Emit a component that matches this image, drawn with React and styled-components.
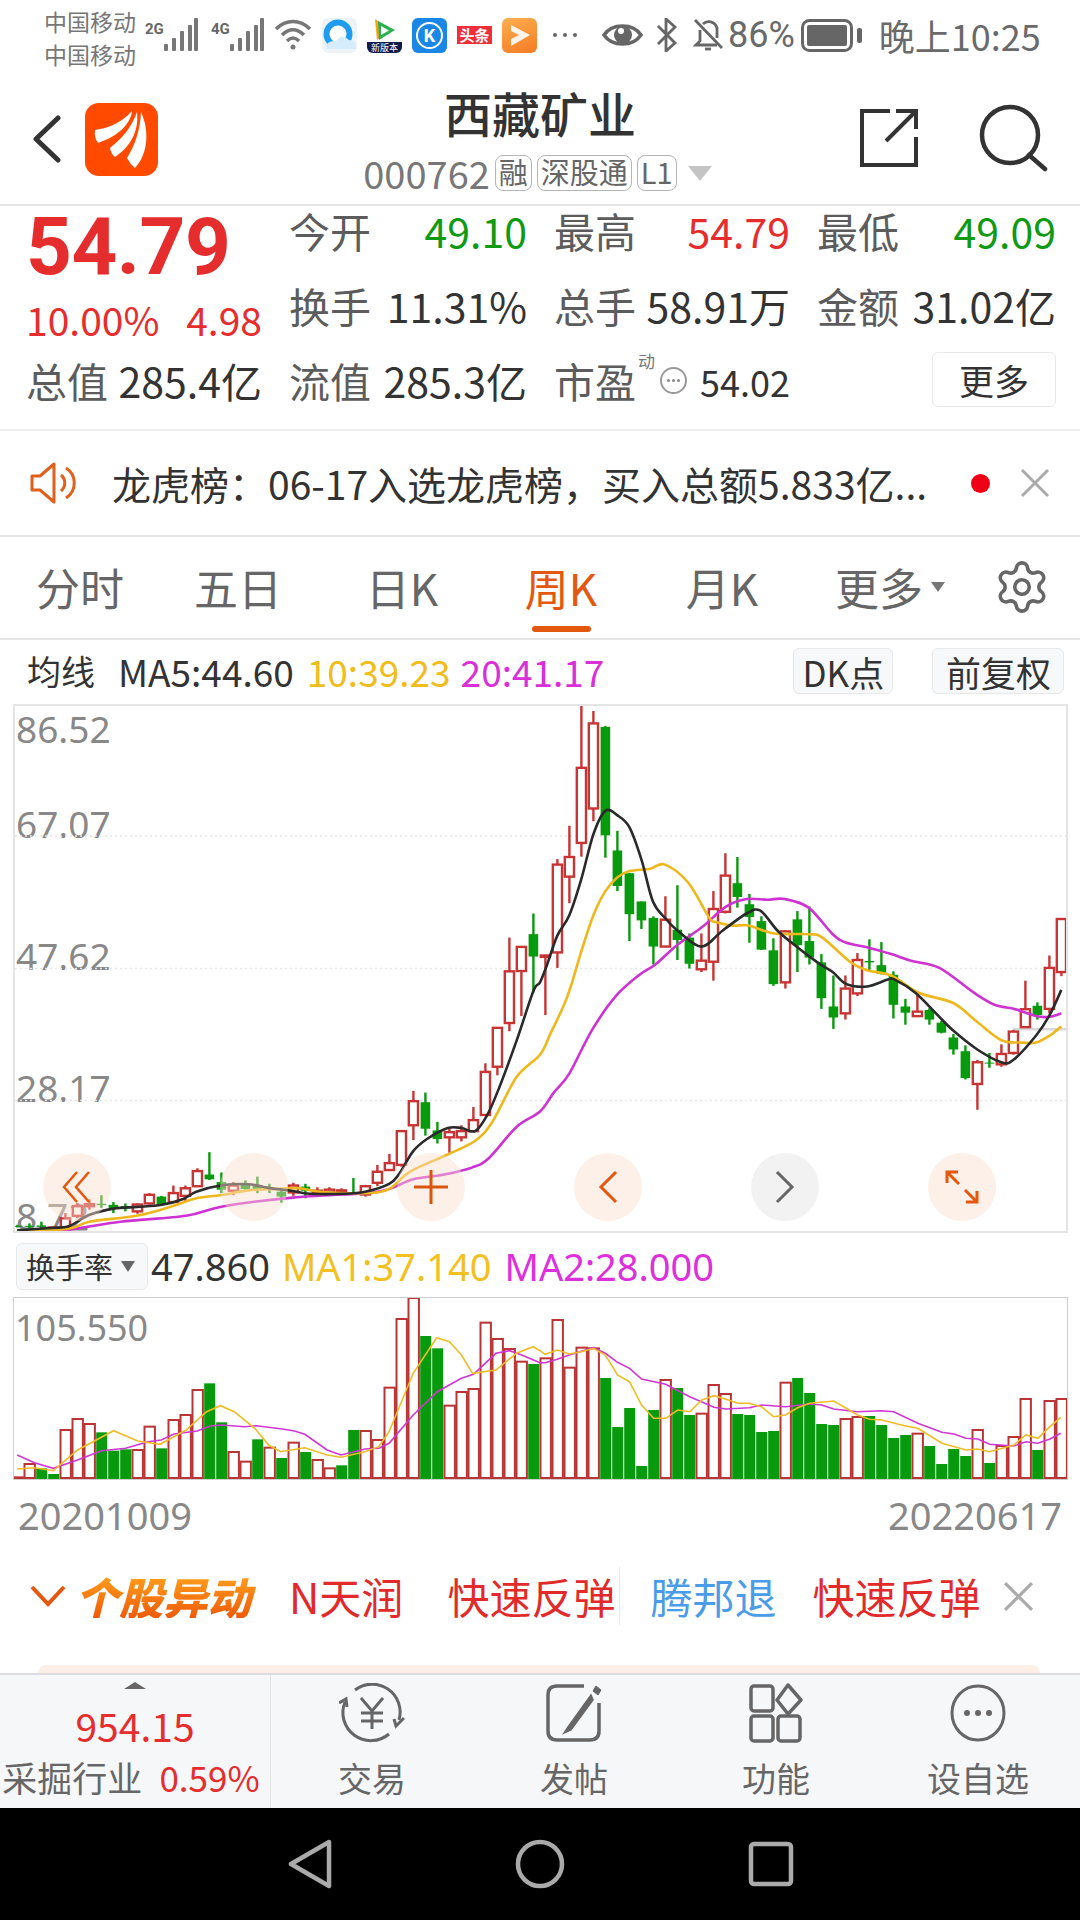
import styled, { createGlobalStyle } from 'styled-components'
import { Settings } from 'lucide-react'

const GlobalStyle = createGlobalStyle`
  html, body { margin: 0; padding: 0; background: #fff; }
  * { box-sizing: border-box; }
  body { font-family: "Noto Sans CJK SC", "Noto Sans", sans-serif; }
`

const RED = '#e62d2d'
const GREEN = '#0f9a14'

// candle data: top wick, body top, body bottom, bottom wick, read off the reference in zoom units
const CANDLES = [
  ['g',1524,1527,1530,1532],['g',1520,1527,1530,1535],['g',1515,1526,1530,1540],['r',1530,1532,1535,1536],
  ['r',1490,1505,1532,1534],['r',1460,1470,1498,1505],['r',1450,1464,1470,1480],['g',1438,1463,1467,1475],
  ['g',1458,1466,1476,1490],['g',1462,1470,1476,1485],['r',1462,1465,1485,1492],['r',1432,1437,1462,1465],
  ['g',1440,1442,1466,1468],['r',1410,1432,1458,1460],['r',1410,1418,1440,1455],['r',1360,1368,1412,1414],
  ['g',1313,1378,1392,1394],['g',1372,1400,1422,1432],['r',1400,1410,1425,1438],['g',1395,1405,1420,1422],
  ['g',1384,1408,1420,1432],['g',1405,1415,1420,1432],['g',1425,1428,1442,1460],['r',1402,1410,1430,1440],
  ['g',1405,1413,1425,1447],['r',1415,1425,1430,1435],['r',1415,1422,1430,1438],['r',1418,1424,1430,1438],
  ['g',1388,1430,1436,1437],['r',1408,1412,1436,1442],['r',1350,1370,1402,1412],['r',1318,1345,1365,1367],
  ['r',1250,1252,1350,1355],['r',1135,1165,1235,1278],['g',1140,1168,1245,1265],['g',1225,1250,1275,1288],
  ['r',1245,1255,1270,1315],['r',1235,1252,1270,1282],['r',1182,1220,1252,1254],['r',1055,1080,1205,1207],
  ['r',950,952,1065,1090],['r',690,788,938,962],['r',715,717,787,918],['g',620,680,745,850],
  ['r',740,742,746,915],['r',462,478,733,778],['r',365,456,513,590],['r',12,197,415,455],
  ['r',32,68,315,352],['g',75,78,393,458],['g',380,437,540,555],['g',503,503,622,700],
  ['g',585,585,640,665],['g',628,633,716,768],['r',570,638,716,718],['g',538,667,697,755],
  ['g',678,690,766,780],['r',678,757,782,790],['r',555,607,760,815],['r',445,510,615,620],
  ['g',456,532,572,603],['g',563,593,630,705],['g',628,642,725,726],['g',692,727,825,830],
  ['r',668,672,820,838],['g',613,637,712,790],['g',600,700,748,768],['g',738,762,866,897],
  ['g',800,890,922,955],['r',800,838,910,928],['r',735,755,852,860],['g',695,758,762,790],
  ['g',703,770,795,797],['g',788,798,885,925],['g',868,890,908,943],['r',850,905,918,920],
  ['g',895,900,928,943],['g',932,937,966,968],['g',970,980,1015,1030],['g',1003,1020,1098,1102],
  ['r',1045,1052,1115,1190],['g',1025,1053,1056,1068],['r',1000,1028,1058,1065],['r',958,963,1025,1030],
  ['r',815,898,950,952],['g',878,888,915,928],['r',742,778,897,910],['r',635,636,790,802],
]

const VOLUME = [
  ['r',712],['r',672],['g',685],['g',702],['r',570],['r',537],['r',552],['g',577],['g',632],['g',628],['r',630],
  ['r',560],['g',625],['r',540],['r',525],['r',450],['g',430],['g',547],['r',636],['r',665],['g',598],['r',623],
  ['g',654],['r',608],['g',636],['r',660],['r',685],['g',676],['g',570],['r',573],['r',600],['r',443],['r',237],
  ['r',174],['g',288],['g',325],['r',497],['r',456],['r',447],['r',248],['r',297],['r',327],['r',365],['g',372],
  ['r',355],['r',240],['r',383],['r',323],['r',325],['g',414],['g',561],['g',504],['g',678],['g',510],['r',420],
  ['g',444],['g',525],['r',521],['r',435],['r',462],['g',522],['g',525],['g',576],['g',573],['r',428],['g',414],
  ['g',459],['g',552],['g',555],['r',537],['r',531],['g',528],['g',555],['g',594],['g',585],['r',581],['g',618],
  ['g',672],['g',627],['g',648],['r',570],['g',669],['r',618],['r',591],['r',477],['g',630],['r',483],['r',477],
]

const SCALE = 2.904
const VOL_Y = 3
const mix = (left, right, top, ys = SCALE) => [
  ...left.map(([x, y]) => [x / SCALE, top + y / ys]),
  ...right.map(([x, y]) => [540 + x / SCALE, top + y / ys]),
]

// catmull-rom through the points, the price lines are smooth in the picture
const smooth = pts => {
  let d = `M${pts[0][0].toFixed(1)} ${pts[0][1].toFixed(1)}`
  for (let i = 0; i < pts.length - 1; i++) {
    const p0 = pts[i - 1] || pts[i]
    const p1 = pts[i]
    const p2 = pts[i + 1]
    const p3 = pts[i + 2] || p2
    const c1 = [p1[0] + (p2[0] - p0[0]) / 6, p1[1] + (p2[1] - p0[1]) / 6]
    const c2 = [p2[0] - (p3[0] - p1[0]) / 6, p2[1] - (p3[1] - p1[1]) / 6]
    d += `C${c1[0].toFixed(1)} ${c1[1].toFixed(1)} ${c2[0].toFixed(1)} ${c2[1].toFixed(1)} ${p2[0].toFixed(1)} ${p2[1].toFixed(1)}`
  }
  return d
}
const flat = pts => pts.map(p => p.map(n => n.toFixed(1)).join(',')).join(' ')

const MA_BLACK = mix(
  [[50,1540],[150,1533],[200,1528],[260,1495],[330,1477],[400,1472],[470,1466],[530,1450],[570,1428],[640,1410],[720,1406],[780,1417],[850,1426],[900,1434],[1000,1434],[1060,1428],[1130,1405],[1160,1375],[1200,1310],[1240,1275],[1300,1243],[1340,1243],[1380,1252],[1415,1205],[1450,1125],[1500,990],[1549,845]],
  [[0,820],[20,770],[50,685],[85,625],[120,520],[155,390],[190,322],[225,335],[260,370],[295,465],[328,585],[365,635],[400,670],[468,716],[530,670],[600,620],[640,612],[690,670],[750,720],[810,765],[850,790],[890,825],[950,832],[1010,812],[1030,812],[1090,850],[1150,910],[1200,960],[1270,1015],[1340,1052],[1375,1045],[1440,975],[1480,915],[1514,842]],
  700)
const MA_YELLOW = mix(
  [[50,1545],[200,1535],[260,1515],[400,1497],[500,1470],[570,1447],[640,1438],[720,1424],[800,1420],[870,1418],[930,1428],[1060,1432],[1130,1420],[1190,1370],[1300,1320],[1380,1280],[1430,1225],[1500,1095]],
  [[0,1030],[30,970],[80,860],[120,730],[155,625],[190,555],[225,515],[260,497],[320,490],[363,478],[430,530],[490,630],[510,645],[560,655],[605,655],[680,678],[780,680],[820,690],[900,760],[950,785],[1020,800],[1100,850],[1200,880],[1270,935],[1340,988],[1400,995],[1440,995],[1480,975],[1514,948]],
  700)
const MA_PINK = mix(
  [[50,1548],[200,1538],[350,1515],[540,1498],[650,1470],[850,1445],[1060,1432],[1130,1420],[1200,1392],[1290,1378],[1370,1358],[1420,1330],[1500,1240]],
  [[0,1195],[40,1140],[85,1085],[150,960],[220,860],[290,797],[335,768],[400,710],[470,660],[540,600],[600,578],[660,580],[710,578],[780,603],[850,680],[890,705],[950,718],[1020,738],[1080,758],[1160,778],[1260,850],[1320,885],[1380,898],[1440,918],[1480,920],[1514,910]],
  700)
const VOL_YELLOW = mix(
  [[50,687],[100,683],[155,692],[225,630],[330,572],[400,603],[465,613],[540,570],[600,515],[640,497],[680,515],[740,565],[780,615],[815,635],[885,623],[950,645],[990,652],[1060,635],[1100,620],[1130,575],[1200,400],[1268,293],[1305,305],[1340,345],[1372,400],[1440,390],[1500,340],[1548,320]],
  [[0,332],[15,343],[50,330],[85,342],[120,335],[155,325],[190,345],[225,405],[260,425],[295,495],[330,535],[365,535],[400,510],[435,515],[470,480],[505,467],[540,478],[575,490],[608,490],[643,500],[678,530],[713,525],[748,503],[783,490],[853,483],[887,503],[922,525],[957,538],[992,540],[1062,558],[1097,565],[1167,610],[1237,630],[1271,627],[1306,635],[1376,615],[1411,585],[1446,595],[1481,560],[1512,532]],
  1240, VOL_Y)
const VOL_PINK = mix(
  [[50,645],[100,668],[155,685],[225,660],[295,632],[365,625],[430,605],[468,600],[505,582],[573,573],[610,558],[645,555],[710,560],[745,557],[820,567],[855,573],[885,583],[950,630],[990,645],[1060,627],[1100,625],[1130,610],[1200,525],[1270,455],[1340,415],[1375,403],[1440,340],[1480,332],[1515,345]],
  [[0,368],[15,368],[50,358],[85,345],[155,323],[190,340],[225,367],[260,385],[295,417],[365,433],[435,470],[505,502],[540,507],[608,503],[643,495],[713,500],[783,492],[818,495],[853,507],[922,515],[992,512],[1027,515],[1097,550],[1167,577],[1202,582],[1237,595],[1271,597],[1306,613],[1376,618],[1411,605],[1446,610],[1481,597],[1512,580]],
  1240, VOL_Y)

const Page = styled.div`
  width: 1080px;
  height: 1920px;
  overflow: hidden;
  display: flex;
  flex-direction: column;
  background: #fff;
  color: #333;
  line-height: 1;
`

/* status bar */
const StatusBar = styled.div`
  height: 70px;
  flex: none;
  display: flex;
  align-items: center;
  padding-left: 44px;
  color: #777;
`
const Carrier = styled.div`
  width: 101px;
  font-size: 23px;
  line-height: 33px;
  padding-top: 6px;
`
const NetTag = styled.span`
  font: 700 15px "Roboto", sans-serif;
  width: 18px;
  align-self: flex-start;
  margin-top: 20px;
  margin-left: ${({ $ml }) => $ml || 0}px;
  color: #666;
`
const StatusIcon = styled.svg`
  flex: none;
  margin-left: ${({ $ml }) => $ml || 0}px;
`
const AppIcon = styled.div`
  position: relative;
  width: 35px;
  height: 35px;
  flex: none;
  margin-left: ${({ $ml }) => $ml || 10}px;
  border-radius: 6px;
  overflow: hidden;
  display: flex;
  align-items: center;
  justify-content: center;
  background: ${({ $bg }) => $bg || 'transparent'};
  color: #fff;
`
const VideoCaption = styled.span`
  position: absolute;
  left: 0;
  right: 0;
  bottom: 0;
  height: 11px;
  background: #101c4a;
  font-size: 9px;
  line-height: 11px;
  text-align: center;
  white-space: nowrap;
`
const KRing = styled.div`
  width: 27px;
  height: 27px;
  border: 2.5px solid #fff;
  border-radius: 50%;
  display: flex;
  align-items: center;
  justify-content: center;
  font: 700 18px "Roboto", sans-serif;
`
const NewsMark = styled.div`
  width: 35px;
  height: 18px;
  background: #ee2f3a;
  font-size: 15px;
  font-weight: 700;
  line-height: 18px;
  text-align: center;
  white-space: nowrap;
`
const Dots = styled.div`
  margin-left: 16px;
  width: 24px;
  display: flex;
  justify-content: space-between;
`
const Dot = styled.span`
  width: 4px;
  height: 4px;
  border-radius: 50%;
  background: #666;
`
const Battery = styled.span`
  font-size: 36px;
  margin-left: 5px;
  color: #6a6a6a;
  font-family: "Roboto", sans-serif;
`
const Clock = styled.span`
  font-size: 36px;
  margin-left: 16px;
  color: #6a6a6a;
  white-space: nowrap;
`

/* header */
const Header = styled.div`
  height: 136px;
  flex: none;
  display: grid;
  grid-template-columns: 1fr auto 1fr;
  border-bottom: 2px solid #e4e4e4;
`
const HeaderLeft = styled.div`
  display: flex;
  align-items: center;
  padding: 4px 0 0 32px;
  gap: 24px;
`
const TitleBox = styled.div`
  display: flex;
  flex-direction: column;
  align-items: center;
  padding-top: 18px;
`
const Title = styled.div`
  font-size: 48px;
  font-weight: 500;
  color: #333;
`
const CodeLine = styled.div`
  display: flex;
  align-items: center;
  margin-top: 18px;
  padding-right: 5px;
  gap: 5px;
  color: #777;
`
const Code = styled.span`
  font-size: 38px;
`
const Tag = styled.span`
  height: 36px;
  padding: 0 3px;
  border: 1.5px solid #b5b5b5;
  border-radius: 8px;
  font-size: 29px;
  line-height: 31px;
  color: #666;
`
const CaretDown = styled.span`
  width: 0;
  height: 0;
  margin-left: 6px;
  border-left: 12px solid transparent;
  border-right: 12px solid transparent;
  border-top: 15px solid #c4c4c4;
`
const HeaderRight = styled.div`
  display: flex;
  align-items: center;
  justify-content: flex-end;
  gap: 61px;
  padding: 2px 32px 0 0;
`

/* quote block */
const Quote = styled.div`
  height: 225px;
  flex: none;
  border-bottom: 2px solid #ececec;
`
const QuoteGrid = styled.div`
  margin-top: -13px;
  padding-left: 26px;
  display: grid;
  grid-template-columns: 236px 238px 236px 239px;
  grid-auto-rows: 75px;
  column-gap: 27px;
`
const PriceBlock = styled.div`
  grid-row: 1 / 3;
  padding-top: 19px;
`
const Price = styled.div`
  height: 70px;
  font: 700 80px/70px "Roboto", sans-serif;
  color: ${RED};
  letter-spacing: -0.5px;
`
const Change = styled.div`
  margin-top: 18px;
  display: flex;
  justify-content: space-between;
  font-size: 39px;
  color: ${RED};
`
const Stat = styled.div`
  display: flex;
  align-items: center;
  justify-content: space-between;
  font-size: 41px;
  white-space: nowrap;
`
const StatLabel = styled.span`
  color: #5c5c5c;
`
const StatValue = styled.span`
  color: ${({ $color }) => $color || '#333'};
`
const Superscript = styled.span`
  align-self: flex-start;
  margin: 9px 0 0 2px;
  font-size: 17px;
  color: #777;
`
const DotsCircle = styled.span`
  width: 27px;
  height: 27px;
  margin: 0 auto 0 5px;
  border: 2px solid #999;
  border-radius: 50%;
  display: flex;
  align-items: center;
  justify-content: center;
  gap: 2px;
`
const CircleDot = styled.span`
  width: 3px;
  height: 3px;
  border-radius: 50%;
  background: #888;
`
const SmallValue = styled.span`
  font-size: 36px;
  color: #333;
`
const MoreButton = styled.div`
  justify-self: end;
  align-self: center;
  width: 124px;
  height: 55px;
  margin-top: -3px;
  border: 1.5px solid #e8e8e8;
  border-radius: 6px;
  display: flex;
  align-items: center;
  justify-content: center;
  font-size: 35px;
  color: #333;
`

/* ticker */
const Ticker = styled.div`
  height: 106px;
  flex: none;
  display: flex;
  align-items: center;
  padding-left: 30px;
  border-bottom: 2px solid #e4e4e4;
`
const TickerText = styled.div`
  width: 859px;
  margin-left: 33px;
  font-size: 39px;
  white-space: nowrap;
  color: #333;
`
const RedDot = styled.span`
  width: 19px;
  height: 19px;
  border-radius: 50%;
  background: #f00014;
`
const CloseBox = styled.span`
  display: flex;
  margin-left: ${({ $ml }) => $ml}px;
`

/* period tabs */
const Tabs = styled.div`
  height: 103px;
  flex: none;
  display: grid;
  grid-template-columns: 160px 156px 172px 146px 176px 160px 104px;
  border-bottom: 2px solid #e4e4e4;
`
const Tab = styled.div`
  position: relative;
  display: flex;
  align-items: center;
  justify-content: center;
  padding-bottom: 1px;
  gap: 8px;
  font-size: 44px;
  color: ${({ $active }) => ($active ? '#e4570f' : '#666')};

  &::after {
    content: '';
    display: ${({ $active }) => ($active ? 'block' : 'none')};
    position: absolute;
    left: 44px;
    bottom: 6px;
    width: 59px;
    height: 6px;
    border-radius: 3px;
    background: #e4570f;
  }
`
const TabCaret = styled.span`
  width: 0;
  height: 0;
  border-left: 7px solid transparent;
  border-right: 7px solid transparent;
  border-top: 10px solid #777;
`

/* moving-average row */
const MaRow = styled.div`
  height: 64px;
  flex: none;
  display: flex;
  align-items: center;
  padding: 0 0 2px 27px;
`
const MaText = styled.span`
  font-size: ${({ $size }) => $size || 37}px;
  margin-left: ${({ $ml }) => $ml || 0}px;
  color: ${({ $color }) => $color || '#333'};
  white-space: nowrap;
`
const OptionButton = styled.div`
  height: 46px;
  width: ${({ $w }) => $w}px;
  margin-left: ${({ $ml }) => $ml}px;
  border: 1.5px solid #e8e8e8;
  border-radius: 6px;
  background: #f7f8fa;
  display: flex;
  align-items: center;
  justify-content: center;
  font-size: 35px;
  color: #333;
`

/* charts */
const ChartFrame = styled.div`
  position: relative;
  flex: none;
  width: 1055px;
  height: ${({ $h }) => $h}px;
  margin-left: 13px;
  border: ${({ $b }) => $b}px solid ${({ $line }) => $line};
  svg { display: block; position: relative; }
`
const AxisLabel = styled.span`
  position: absolute;
  left: ${({ $x }) => $x || 1}px;
  top: ${({ $top }) => $top}px;
  font: 400 ${({ $size }) => $size || 37}px/1 "Noto Sans", sans-serif;
  color: #888;
`
const NavLayer = styled.div`
  position: absolute;
  left: 28px;
  top: 447px;
  display: flex;
  gap: 109px;
`
const NavCircle = styled.div`
  width: 68px;
  height: 68px;
  border-radius: 50%;
  background: ${({ $muted }) => ($muted ? 'rgba(232,232,232,.55)' : 'rgba(250,221,203,.45)')};
  display: flex;
  align-items: center;
  justify-content: center;
`
const IndicatorRow = styled.div`
  height: 64px;
  flex: none;
  display: flex;
  align-items: center;
  padding: 2px 0 0 16px;
  font-family: "Noto Sans", sans-serif;
`
const IndicatorSelect = styled.div`
  width: 132px;
  height: 47px;
  margin-right: 3px;
  border: 1.5px solid #e8e8e8;
  border-radius: 6px;
  background: #f7f8fa;
  display: flex;
  align-items: center;
  padding-left: 9px;
  gap: 8px;
  font: 400 29px "Noto Sans CJK SC", sans-serif;
  color: #333;
`
const SelectCaret = styled.span`
  width: 0;
  height: 0;
  border-left: 7px solid transparent;
  border-right: 7px solid transparent;
  border-top: 11px solid #666;
`
const IndicatorValue = styled.span`
  font-size: 38px;
  margin-left: ${({ $ml }) => $ml || 0}px;
  color: ${({ $color }) => $color || '#333'};
  white-space: nowrap;
`
const DateRow = styled.div`
  height: 70px;
  flex: none;
  display: flex;
  align-items: center;
  justify-content: space-between;
  padding: 0 18px;
  font: 400 38px "Noto Sans", sans-serif;
  color: #888;
`

/* signal strip */
const Signals = styled.div`
  height: 92px;
  flex: none;
  display: flex;
  align-items: center;
  padding-left: 30px;
  font-size: 42px;
  white-space: nowrap;
`
const SignalTitle = styled.span`
  margin-left: 9px;
  width: 214px;
  font-size: 44px;
  font-weight: 900;
  font-style: italic;
  background: linear-gradient(180deg, #ffa11c, #ef5a08);
  -webkit-background-clip: text;
  background-clip: text;
  color: transparent;
`
const SignalItem = styled.span`
  margin-left: ${({ $ml }) => $ml || 0}px;
  color: ${({ $color }) => $color || '#e22a2a'};
`
const SignalDivider = styled.span`
  width: 1px;
  height: 58px;
  margin: 0 30px 0 4px;
  background: #e8e8e8;
`
const Peach = styled.div`
  flex: none;
  height: 8px;
  margin: 23px 40px 0 38px;
  border-radius: 14px 14px 0 0;
  background: #fcefe7;
`

/* bottom bar */
const BottomBar = styled.div`
  height: 135px;
  flex: none;
  display: flex;
  background: #f6f7f9;
  border-top: 2px solid #dcdce0;
`
const SectorBox = styled.div`
  width: 271px;
  flex: none;
  border-right: 1px solid #e4e4e6;
  display: flex;
  flex-direction: column;
  align-items: center;
  padding: 7px 8px 0 0;
`
const SectorCaret = styled.span`
  width: 0;
  height: 0;
  margin-left: 8px;
  border-left: 11px solid transparent;
  border-right: 11px solid transparent;
  border-bottom: 7px solid #666;
`
const SectorPrice = styled.div`
  margin: 17px 0 0 8px;
  font-size: 39px;
  color: ${RED};
`
const SectorRow = styled.div`
  margin-top: 14px;
  display: flex;
  gap: 17px;
  font-size: 35px;
  color: #666;
  white-space: nowrap;
`
const SectorChange = styled.span`
  color: ${RED};
`
const BarItems = styled.div`
  display: grid;
  grid-template-columns: repeat(4, 202px);
`
const BarItem = styled.div`
  display: flex;
  flex-direction: column;
  align-items: center;
  padding-top: 8px;
  font-size: 34px;
  color: #666;
  svg { height: 60px; margin-bottom: 18px; }
`

/* system nav */
const SystemNav = styled.div`
  flex: 1;
  background: #000;
  display: flex;
  align-items: center;
  padding: 0 0 0 288px;
  gap: 183px;
`

function Signal() {
  return (
    <StatusIcon width="35" height="34" viewBox="0 0 35 34">
      <g fill="#777">
        <rect x="1" y="26" width="4" height="7" rx="1" />
        <rect x="9" y="20" width="4" height="13" rx="1" />
        <rect x="17" y="13" width="4" height="20" rx="1" />
        <rect x="25" y="7" width="4" height="26" rx="1" />
        <rect x="31" y="0" width="4" height="33" rx="1" />
      </g>
    </StatusIcon>
  )
}

function BarIconTrade() {
  return (
    <svg width="66" viewBox="0 0 66 60" fill="none" stroke="#666" strokeWidth="3">
      <path d="M16 7 A28 28 0 0 1 60 37" />
      <path d="M65 35 L57 43 L55 36" />
      <path d="M6 19 A28 28 0 0 0 50 51" />
      <path d="M0 20 L7 16 L8 24" />
      <path d="M22 15 L33 28 L44 15 M22 30 H44 M22 38 H44 M33 28 V46" />
    </svg>
  )
}

function BarIconPost() {
  return (
    <svg width="56" viewBox="0 0 56 60" fill="none" stroke="#666" strokeWidth="3.5">
      <path d="M38 3 H11 Q2 3 2 12 V48 Q2 57 11 57 H44 Q53 57 53 48 V20" />
      <path d="M45 12 L22 44 L18 50 L25 47 L47 17 Z" fill="#666" strokeWidth="1.5" />
      <path d="M50 3 L55 7 L52 12 L47 8 Z" fill="#666" strokeWidth="1" />
    </svg>
  )
}

function BarIconTools() {
  return (
    <svg width="54" viewBox="0 0 54 60" fill="none" stroke="#666" strokeWidth="3.5">
      <rect x="2" y="3" width="22" height="25" rx="3" />
      <path d="M39 2 L52 17 L39 31 L28 17 Z" strokeLinejoin="round" />
      <rect x="2" y="33" width="22" height="25" rx="3" />
      <rect x="29" y="33" width="22" height="25" rx="3" />
    </svg>
  )
}

function BarIconMore() {
  return (
    <svg width="58" viewBox="0 0 58 60" fill="none" stroke="#666" strokeWidth="3">
      <ellipse cx="29" cy="30" rx="26" ry="27" />
      <g fill="#666" stroke="none">
        <circle cx="18" cy="30" r="3" />
        <circle cx="29" cy="30" r="3" />
        <circle cx="40" cy="30" r="3" />
      </g>
    </svg>
  )
}

const Cross = ({ size = 30, color = '#aaa' }) => (
  <svg width={size} height={size} viewBox="0 0 30 30" stroke={color} strokeWidth="3">
    <path d="M2 2 L28 28 M28 2 L2 28" />
  </svg>
)

function PriceChart() {
  return (
    <svg width="1051" height="525" viewBox="15 706 1051 525">
      {[836, 968.6, 1100.5].map(y => (
        <line key={y} x1="15" x2="1066" y1={y} y2={y} stroke="#e6e6e6" strokeWidth="1.5" strokeDasharray="2 3" />
      ))}
      <rect x="17" y="1230" width="70" height="2" fill="#bbb" />
      <rect x="1013" y="1028" width="54" height="2.5" fill="#d8d8d8" />
      {CANDLES.map(([kind, top, bodyTop, bodyBottom, bottom], i) => {
        const x = 17.4 + 12 * i
        const y = v => 700 + v / SCALE
        const color = kind === 'r' ? '#c83434' : '#079a0c'
        return (
          <g key={i}>
            <line x1={x} x2={x} y1={y(top)} y2={y(bottom)} stroke={color} strokeWidth="2.4" />
            {kind === 'r' ? (
              <rect x={x - 4.6} y={y(bodyTop)} width="9.2" height={Math.max((bodyBottom - bodyTop) / SCALE, 1)} fill="#fff" stroke={color} strokeWidth="2.4" />
            ) : (
              <rect x={x - 4.8} y={y(bodyTop)} width="9.6" height={Math.max((bodyBottom - bodyTop) / SCALE, 1)} fill={color} />
            )}
          </g>
        )
      })}
      <path d={smooth(MA_PINK)} fill="none" stroke="#cf32d2" strokeWidth="2.6" />
      <path d={smooth(MA_YELLOW)} fill="none" stroke="#eeb81c" strokeWidth="2.6" />
      <path d={smooth(MA_BLACK)} fill="none" stroke="#2a2a2a" strokeWidth="2.6" />
    </svg>
  )
}

function VolumeChart() {
  return (
    <svg width="1053" height="181" viewBox="14 1298 1053 181">
      {VOLUME.map(([kind, top], i) => {
        const x = 17.7 + 12 * i
        const y = 1240 + top / VOL_Y
        return kind === 'r' ? (
          <rect key={i} x={x - 5.2} y={y} width="10.4" height={1478 - y} fill="#fff" stroke="#b93434" strokeWidth="2" />
        ) : (
          <rect key={i} x={x - 5.5} y={y} width="11" height={1479 - y} fill="#079a0c" />
        )
      })}
      <polyline points={flat(VOL_PINK)} fill="none" stroke="#d036d4" strokeWidth="1.6" />
      <polyline points={flat(VOL_YELLOW)} fill="none" stroke="#f0bc24" strokeWidth="1.6" />
    </svg>
  )
}

export default function App() {
  return (
    <Page>
      <GlobalStyle />
      <StatusBar>
        <Carrier>中国移动<br />中国移动</Carrier>
        <NetTag>2G</NetTag>
        <Signal />
        <NetTag $ml={13}>4G</NetTag>
        <Signal />
        <StatusIcon $ml={10} width="38" height="34" viewBox="0 0 38 34" fill="none" stroke="#777" strokeWidth="3.5">
          <path d="M2 11 C12 1 26 1 36 11" />
          <path d="M8 17 C15 10 23 10 30 17" />
          <path d="M13 23 C17 19 21 19 25 23" />
          <circle cx="19" cy="29" r="2.5" fill="#777" stroke="none" />
        </StatusIcon>
        <AppIcon $bg="#eef3f8">
          <svg width="35" height="35" viewBox="0 0 35 35">
            <circle cx="16" cy="16" r="11.5" fill="#fff" stroke="#1e9cf0" strokeWidth="6" />
            <path d="M4 31 Q4 22 14 23 Q20 15 27 22 Q35 22 34 31 Z" fill="#d4ecfb" />
          </svg>
        </AppIcon>
        <AppIcon>
          <svg width="35" height="35" viewBox="0 0 35 35">
            <path d="M8 1 L24 12 L10 22 Z" fill="#ff9b1a" />
            <path d="M11 3 L28 12 L12 22 Z" fill="#27b24f" />
            <path d="M14 8 L22 12.5 L14 17 Z" fill="#fff" />
          </svg>
          <VideoCaption>新版本</VideoCaption>
        </AppIcon>
        <AppIcon $bg="#1a87e6"><KRing>K</KRing></AppIcon>
        <AppIcon><NewsMark>头条</NewsMark></AppIcon>
        <AppIcon $bg="linear-gradient(160deg,#fcae50,#f57b24)">
          <svg width="35" height="35" viewBox="0 0 35 35">
            <path d="M9 7 L28 17 L9 28 L9 21 L17 17 L9 13 Z" fill="#fff" opacity=".9" />
          </svg>
        </AppIcon>
        <Dots><Dot /><Dot /><Dot /></Dots>
        <StatusIcon $ml={25} width="41" height="30" viewBox="0 0 41 30">
          <path d="M2 15 C10 3 31 3 39 15 C31 27 10 27 2 15 Z" fill="none" stroke="#666" strokeWidth="3.5" />
          <circle cx="21" cy="15" r="9" fill="#666" />
          <circle cx="19" cy="11" r="3" fill="#fff" />
        </StatusIcon>
        <StatusIcon $ml={13} width="22" height="34" viewBox="0 0 22 34" fill="none" stroke="#666" strokeWidth="2.8">
          <path d="M2 8 L19 25 L10 33 V1 L19 9 L2 26" />
        </StatusIcon>
        <StatusIcon $ml={15} width="30" height="34" viewBox="0 0 30 34" fill="none" stroke="#666" strokeWidth="2.8">
          <path d="M7 12 V23 L3 27 H24" />
          <path d="M10 6 C14 2 22 3 24 10 V20" />
          <path d="M12 31 H18" />
          <path d="M2 2 L29 30" />
        </StatusIcon>
        <Battery>86%</Battery>
        <StatusIcon $ml={6} width="62" height="33" viewBox="0 0 62 33">
          <rect x="1.5" y="1.5" width="49" height="30" rx="7" fill="none" stroke="#666" strokeWidth="3" />
          <rect x="6" y="6" width="40" height="21" rx="2" fill="#666" />
          <rect x="56" y="9" width="5" height="15" rx="2" fill="#666" />
        </StatusIcon>
        <Clock>晚上10:25</Clock>
      </StatusBar>

      <Header>
        <HeaderLeft>
          <svg width="29" height="48" viewBox="0 0 29 48" fill="none" stroke="#333" strokeWidth="5" strokeLinecap="round" strokeLinejoin="round">
            <path d="M26 3 L4 24 L26 45" />
          </svg>
          <svg width="73" height="73" viewBox="0 0 73 73">
            <rect width="73" height="73" rx="14" fill="#ff4a00" />
            <path d="M10 27 C24 25 36 20 47 8 C46 20 34 33 13 40 Q9 35 10 27 Z" fill="#fff" />
            <path d="M25 45 C36 36 46 26 52 9 C54 26 47 43 30 54 Q26 51 25 45 Z" fill="#fff" />
            <path d="M42 55 C50 42 55 28 56 9 C64 26 64 50 50 65 Q45 61 42 55 Z" fill="#fff" />
          </svg>
        </HeaderLeft>
        <TitleBox>
          <Title>西藏矿业</Title>
          <CodeLine>
            <Code>000762</Code>
            <Tag>融</Tag>
            <Tag>深股通</Tag>
            <Tag>L1</Tag>
            <CaretDown />
          </CodeLine>
        </TitleBox>
        <HeaderRight>
          <svg width="58" height="58" viewBox="0 0 58 58" fill="none" stroke="#333" strokeWidth="4">
            <path d="M30 2 H2 V56 H56 V28" />
            <path d="M26 32 L55 3 M36 2 H56 V20" />
          </svg>
          <svg width="69" height="68" viewBox="0 0 69 68" fill="none" stroke="#333" strokeWidth="4.5" strokeLinecap="round">
            <circle cx="31" cy="31" r="28" />
            <path d="M50 51 L66 65" />
          </svg>
        </HeaderRight>
      </Header>

      <Quote>
        <QuoteGrid>
          <PriceBlock>
            <Price>54.79</Price>
            <Change><span>10.00%</span><span>4.98</span></Change>
          </PriceBlock>
          <Stat><StatLabel>今开</StatLabel><StatValue $color={GREEN}>49.10</StatValue></Stat>
          <Stat><StatLabel>最高</StatLabel><StatValue $color={RED}>54.79</StatValue></Stat>
          <Stat><StatLabel>最低</StatLabel><StatValue $color={GREEN}>49.09</StatValue></Stat>
          <Stat><StatLabel>换手</StatLabel><StatValue>11.31%</StatValue></Stat>
          <Stat><StatLabel>总手</StatLabel><StatValue>58.91万</StatValue></Stat>
          <Stat><StatLabel>金额</StatLabel><StatValue>31.02亿</StatValue></Stat>
          <Stat><StatLabel>总值</StatLabel><StatValue>285.4亿</StatValue></Stat>
          <Stat><StatLabel>流值</StatLabel><StatValue>285.3亿</StatValue></Stat>
          <Stat>
            <StatLabel>市盈</StatLabel>
            <Superscript>动</Superscript>
            <DotsCircle><CircleDot /><CircleDot /><CircleDot /></DotsCircle>
            <SmallValue>54.02</SmallValue>
          </Stat>
          <MoreButton>更多</MoreButton>
        </QuoteGrid>
      </Quote>

      <Ticker>
        <svg width="49" height="42" viewBox="0 0 49 42" fill="none" stroke="#e0601c" strokeWidth="3">
          <path d="M2 14 H10 L24 2 V40 L10 28 H2 Z" strokeLinejoin="round" />
          <path d="M31 13 C36 17 36 25 31 29" />
          <path d="M36 6 C47 13 47 29 36 36" />
        </svg>
        <TickerText>龙虎榜：06-17入选龙虎榜，买入总额5.833亿...</TickerText>
        <RedDot />
        <CloseBox $ml={30}><Cross /></CloseBox>
      </Ticker>

      <Tabs>
        <Tab>分时</Tab>
        <Tab>五日</Tab>
        <Tab>日K</Tab>
        <Tab $active>周K</Tab>
        <Tab>月K</Tab>
        <Tab>更多<TabCaret /></Tab>
        <Tab><Settings size={58} strokeWidth={1.5} color="#666" /></Tab>
      </Tabs>

      <MaRow>
        <MaText $size={34}>均线</MaText>
        <MaText $ml={23}>MA5:44.60</MaText>
        <MaText $ml={13} $color="#f0bd1c">10:39.23</MaText>
        <MaText $ml={10} $color="#d92fd9">20:41.17</MaText>
        <OptionButton $w={100} $ml={189}>DK点</OptionButton>
        <OptionButton $w={132} $ml={39}>前复权</OptionButton>
      </MaRow>

      <ChartFrame $h={529} $b={2} $line="#e4e4e4">
        <AxisLabel $top={4}>86.52</AxisLabel>
        <AxisLabel $top={99}>67.07</AxisLabel>
        <AxisLabel $top={231}>47.62</AxisLabel>
        <AxisLabel $top={363}>28.17</AxisLabel>
        <AxisLabel $top={491}>8.72</AxisLabel>
        <PriceChart />
        <NavLayer>
          <NavCircle>
            <svg width="30" height="34" viewBox="0 0 30 34" fill="none" stroke="#e4570f" strokeWidth="2.5">
              <path d="M15 2 L2 17 L15 32 M27 2 L14 17 L27 32" />
            </svg>
          </NavCircle>
          <NavCircle />
          <NavCircle>
            <svg width="34" height="34" viewBox="0 0 34 34" stroke="#d9560f" strokeWidth="3">
              <path d="M0 17 H34 M17 0 V34" />
            </svg>
          </NavCircle>
          <NavCircle>
            <svg width="20" height="34" viewBox="0 0 20 34" fill="none" stroke="#e4570f" strokeWidth="3">
              <path d="M18 2 L3 17 L18 32" />
            </svg>
          </NavCircle>
          <NavCircle $muted>
            <svg width="20" height="34" viewBox="0 0 20 34" fill="none" stroke="#666" strokeWidth="3">
              <path d="M2 2 L17 17 L2 32" />
            </svg>
          </NavCircle>
          <NavCircle>
            <svg width="34" height="34" viewBox="0 0 34 34" fill="none" stroke="#e4570f" strokeWidth="3">
              <path d="M2 13 V2 H13 M2 2 L14 14 M32 21 V32 H21 M32 32 L20 20" />
            </svg>
          </NavCircle>
        </NavLayer>
      </ChartFrame>

      <IndicatorRow>
        <IndicatorSelect>换手率<SelectCaret /></IndicatorSelect>
        <IndicatorValue>47.860</IndicatorValue>
        <IndicatorValue $ml={12} $color="#f2c01f">MA1:37.140</IndicatorValue>
        <IndicatorValue $ml={13} $color="#dd2fdd">MA2:28.000</IndicatorValue>
      </IndicatorRow>

      <ChartFrame $h={183} $b={1} $line="#cfcfcf">
        <AxisLabel $x={1} $top={12} $size={36}>105.550</AxisLabel>
        <VolumeChart />
      </ChartFrame>

      <DateRow><span>20201009</span><span>20220617</span></DateRow>

      <Signals>
        <svg width="36" height="22" viewBox="0 0 36 22" fill="none" stroke="#e4570f" strokeWidth="4">
          <path d="M2 2 L18 19 L34 2" />
        </svg>
        <SignalTitle>个股异动</SignalTitle>
        <SignalItem>N天润</SignalItem>
        <SignalItem $ml={44}>快速反弹</SignalItem>
        <SignalDivider />
        <SignalItem $color="#4a9ce8">腾邦退</SignalItem>
        <SignalItem $ml={36}>快速反弹</SignalItem>
        <CloseBox $ml={23}><Cross size={31} /></CloseBox>
      </Signals>
      <Peach />

      <BottomBar>
        <SectorBox>
          <SectorCaret />
          <SectorPrice>954.15</SectorPrice>
          <SectorRow>
            <span>采掘行业</span>
            <SectorChange>0.59%</SectorChange>
          </SectorRow>
        </SectorBox>
        <BarItems>
          <BarItem><BarIconTrade />交易</BarItem>
          <BarItem><BarIconPost />发帖</BarItem>
          <BarItem><BarIconTools />功能</BarItem>
          <BarItem><BarIconMore />设自选</BarItem>
        </BarItems>
      </BottomBar>

      <SystemNav>
        <svg width="44" height="50" viewBox="0 0 44 50" fill="none" stroke="#aaa" strokeWidth="4.5" strokeLinejoin="round">
          <path d="M41 3 L3 25 L41 47 Z" />
        </svg>
        <svg width="50" height="50" viewBox="0 0 50 50" fill="none" stroke="#aaa" strokeWidth="4.5">
          <circle cx="25" cy="25" r="22" />
        </svg>
        <svg width="46" height="46" viewBox="0 0 46 46" fill="none" stroke="#aaa" strokeWidth="4.5">
          <rect x="3" y="3" width="40" height="40" rx="3" />
        </svg>
      </SystemNav>
    </Page>
  )
}
